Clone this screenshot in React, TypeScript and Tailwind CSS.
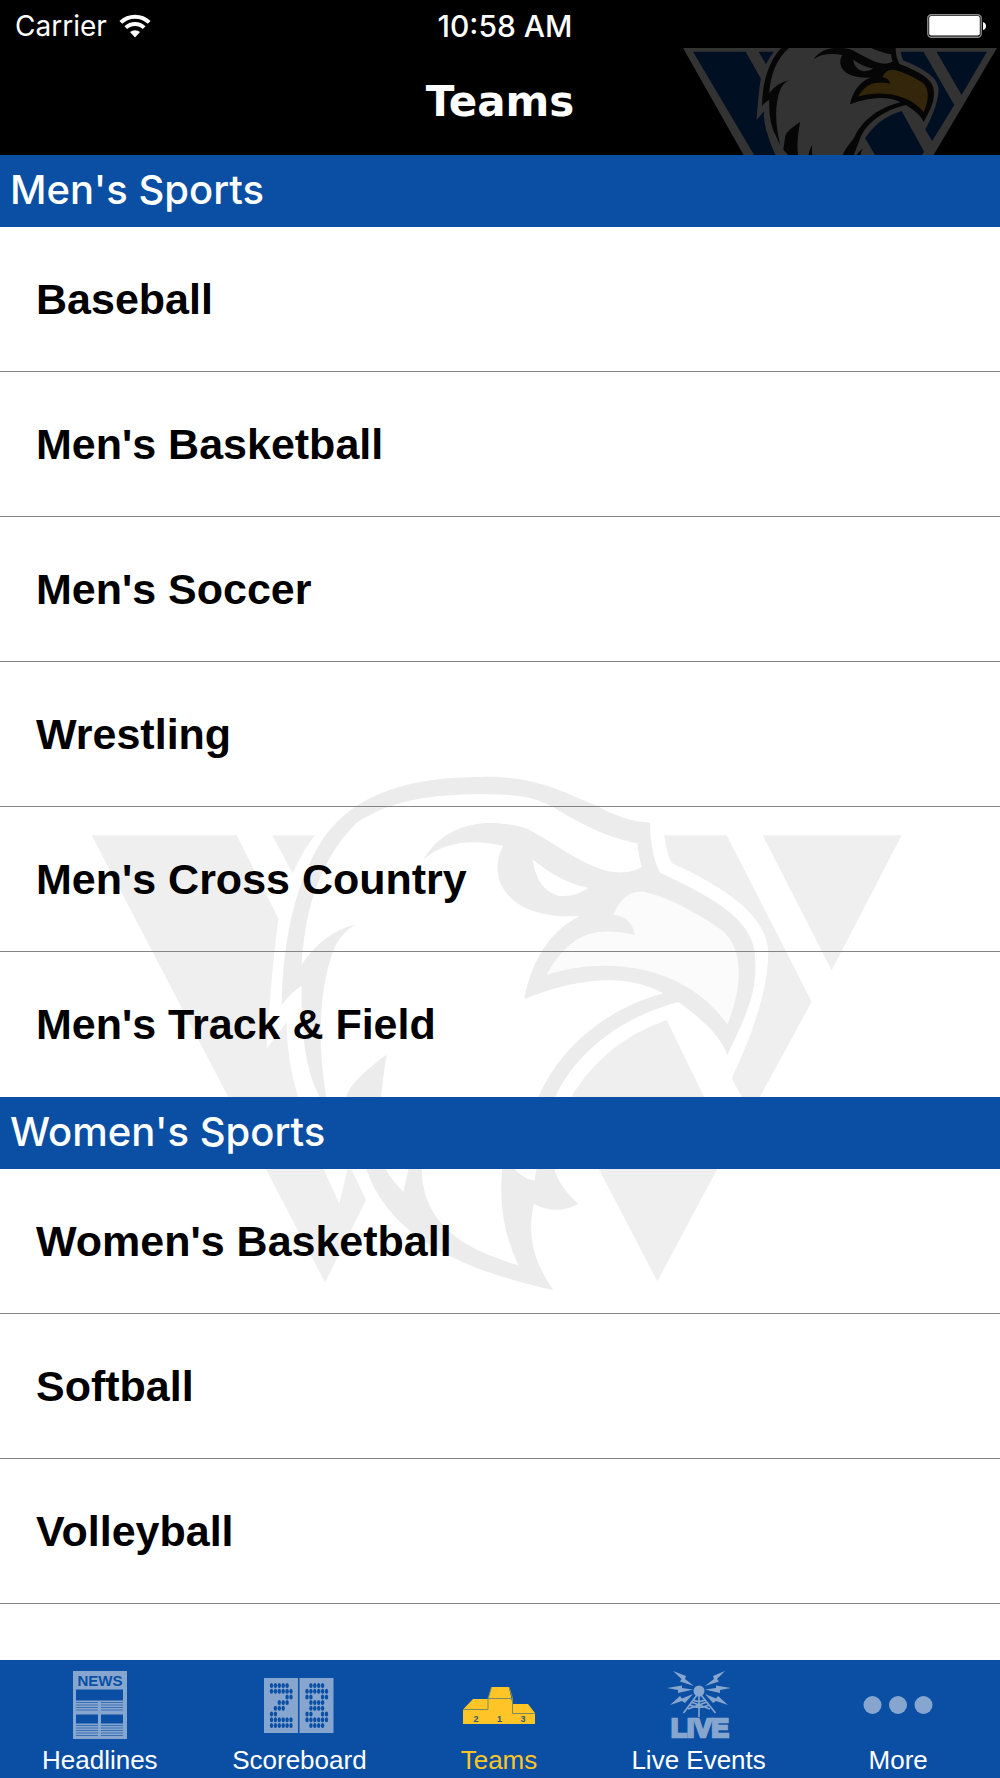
import { useState } from "react";
import type { ReactNode } from "react";

interface LogoColors {
    letter: string;
    outline: string;
    feather: string;
    beak: string;
}

interface Section {
    title: string;
    teams: string[];
}

interface Tab {
    name: string;
    icon: ReactNode;
}

const SECTIONS: Section[] = [
    {
        title: "Men's Sports",
        teams: [
            "Baseball",
            "Men's Basketball",
            "Men's Soccer",
            "Wrestling",
            "Men's Cross Country",
            "Men's Track & Field"
        ]
    },
    {
        title: "Women's Sports",
        teams: ["Women's Basketball", "Softball", "Volleyball", "Women's Cross Country"]
    }
];

const EagleLogo = ({ letter, outline, feather, beak }: LogoColors) => (
    <>
        {/* W behind the head */}
        <g fill={letter}>
            <path d="M95 247H530L655 465Q632 620 620 805L680 735Q680 840 715 932Q745 1040 838 1208L862 1121H875L918 1200L795 1415Z" />
            <path d="M637 247H765Q725 290 698 348Z" />
            <path d="M1812 247H2000L2255 682L2072 975L2015 882Q2125 680 2125 550C2120 460 2000 385 1835 320Q1822 300 1812 247Z" />
            <path d="M2108 247H2525L2315 600Z" />
            <path d="M1820 730L2006 1063L1792 1412L1518 954Q1620 790 1820 730Z" />
        </g>
        {/* head */}
        <path
            fill={outline}
            d="M665 690C668 560 690 390 790 255C890 130 1070 95 1260 95C1440 90 1530 145 1610 170Q1690 210 1770 215Q1772 300 1800 345C1920 395 2090 460 2085 570C2095 660 2050 730 2002 822Q1980 760 1855 683C1690 720 1550 810 1485 932Q1450 1020 1425 1090L1365 1121Q1400 1150 1425 1148Q1425 1090 1500 1036Q1440 1120 1555 1210Q1490 1240 1422 1210C1400 1290 1420 1360 1480 1435C1300 1400 1000 1330 920 1121Q830 1060 780 932Q720 840 725 640Q690 660 665 690Z"
        />
        <path
            fill={feather}
            d="M725 585C735 440 780 310 890 215C990 155 1120 140 1260 140C1400 140 1440 150 1520 195Q1640 255 1732 268Q1735 300 1745 330C1640 380 1530 290 1400 230C1290 200 1160 210 1090 310Q1180 245 1330 275C1280 350 1330 470 1560 458C1460 500 1410 590 1393 675Q1650 585 1810 660C1640 700 1500 800 1435 932C1400 1000 1330 1040 1325 1140Q1315 1260 1375 1370C1220 1330 1090 1270 1085 1121Q1075 1060 1080 1005Q1050 1060 1045 1121L1030 1178Q985 1140 965 1100Q945 1010 980 820Q870 890 858 932L835 1082Q740 760 815 560Q840 500 890 480Q790 500 725 585Z"
        />
        <path fill={feather} d="M1418 310Q1500 370 1585 385Q1545 410 1495 405Q1430 390 1418 310Z" />
        <path
            fill={beak}
            d="M1660 455Q1690 390 1750 395C1830 410 1920 455 1985 495C2050 540 2050 640 2002 742C1880 590 1650 560 1460 612C1530 500 1610 485 1725 508Q1715 460 1660 455Z"
        />
    </>
);

const HeaderLogo = () => (
    <svg
        className="absolute right-[3px] bottom-0 h-[107px] w-[314px]"
        viewBox="12 217 2596 873"
        preserveAspectRatio="none"
        aria-hidden="true"
    >
        <path d="M12 217H2608L2084 1090H513Z" fill="#333333" />
        <EagleLogo letter="#000f22" outline="#060606" feather="#333333" beak="#33260b" />
    </svg>
);

const Watermark = () => (
    <div className="pointer-events-none absolute inset-x-0 top-[620px] flex justify-center">
        <svg
            className="h-[517px] w-[820px]"
            viewBox="90 90 2460 1350"
            preserveAspectRatio="none"
            aria-hidden="true"
        >
            <EagleLogo letter="#efefef" outline="#ececec" feather="#ffffff" beak="#fbfbfb" />
        </svg>
    </div>
);

const WifiIcon = () => (
    <svg className="h-[24px] w-[32px]" viewBox="0 0 32 24" fill="none" stroke="#ffffff" strokeWidth="4" aria-hidden="true">
        <path d="M1.8 8.4a20.5 20.5 0 0 1 28.4 0" />
        <path d="M6.8 13.6a13.3 13.3 0 0 1 18.4 0" />
        <path d="M16 23.5l-5-5.4a7.4 7.4 0 0 1 10 0z" fill="#ffffff" stroke="none" />
    </svg>
);

const BatteryIcon = () => (
    <svg className="h-[24px] w-[60px]" viewBox="0 0 60 24" aria-hidden="true">
        <rect x="0.8" y="0.8" width="53.4" height="22.4" rx="3.5" fill="none" stroke="#8c8c8c" strokeWidth="1.4" />
        <rect x="2.2" y="2" width="50.6" height="19.6" rx="2" fill="#ffffff" />
        <path d="M56 8q3 1 3 4t-3 4z" fill="#ffffff" />
    </svg>
);

const NewsIcon = () => (
    <svg className="h-[68px] w-[54px]" viewBox="0 0 54 68" aria-hidden="true">
        <rect width="54" height="68" fill="#86a6cf" />
        <text
            x="27"
            y="15"
            fill="#0a4fa4"
            fontFamily="Liberation Sans"
            fontWeight="700"
            fontSize="15"
            textAnchor="middle"
        >
            NEWS
        </text>
        <g fill="#0a4fa4">
            <rect x="3" y="18.5" width="47" height="11" />
            <rect x="3" y="43.5" width="22" height="9" />
            <rect x="28" y="43.5" width="22" height="9" />
        </g>
        <path
            d="M3 31.5h22M3 34h22M3 36.5h22M3 39h22M28 31.5h22M28 34h22M28 36.5h22M28 39h22M3 54.5h22M3 57h22M3 59.5h22M3 62h22M3 64.5h22M28 54.5h22M28 57h22M28 59.5h22M28 62h22M28 64.5h22"
            stroke="#0a4fa4"
            strokeOpacity="0.6"
            strokeWidth="1"
        />
    </svg>
);

const DIGIT_TWO = ["11111.", "111111", "....11", "..111.", ".111..", "11....", "111111", "111111"];
const DIGIT_EIGHT = [".1111.", "111111", "11..11", ".1111.", ".1111.", "11..11", "111111", ".1111."];

const DotDigit = ({ rows, left }: { rows: string[]; left: number }) => (
    <>
        {rows.map((row, y) =>
            row.split("").map((dot, x) =>
                dot === "1" ? (
                    <ellipse key={`${x}-${y}`} cx={left + x * 3.9} cy={7.5 + y * 5.7} rx="1.7" ry="2.5" />
                ) : null
            )
        )}
    </>
);

const ScoreboardIcon = () => (
    <svg className="h-[55px] w-[70px]" viewBox="0 0 70 55" aria-hidden="true">
        <rect width="34" height="55" fill="#86a6cf" />
        <rect x="35.5" width="34" height="55" fill="#86a6cf" />
        <g fill="#0a4fa4">
            <DotDigit rows={DIGIT_TWO} left={7.5} />
            <DotDigit rows={DIGIT_EIGHT} left={43} />
        </g>
    </svg>
);

const PodiumIcon = () => (
    <svg className="h-[37px] w-[72px]" viewBox="0 0 72 37" aria-hidden="true">
        <path d="M0 22.5L10 12H25L28.5 0H46L49.5 17H65L72 26V37H0Z" fill="#ffc526" />
        <path d="M0 22.5H25V11.5H49.5V26.5H72M25 12L28.5 0M49.5 17V11L46 0" fill="none" stroke="#7a8a62" strokeWidth="1" />
        <g fill="#2f5580" fontFamily="Liberation Sans" fontWeight="700" fontSize="9" textAnchor="middle">
            <text x="13" y="35">2</text>
            <text x="36.5" y="35">1</text>
            <text x="60" y="35">3</text>
        </g>
    </svg>
);

const LiveIcon = () => (
    <svg className="h-[68px] w-[64px] overflow-visible" viewBox="0 0 64 68" fill="#86a6cf" aria-hidden="true">
        <circle cx="32" cy="20" r="5.5" />
        <path
            d="M30 24L16.5 42M34 24L48.5 42M32 24V46M23 34Q32 39 42 34M26 29Q32 32 38 29M21 38L40 31M43 38L24 31"
            fill="none"
            stroke="#86a6cf"
            strokeWidth="1.6"
        />
        <path d="M6 0L19 5L18 8L27 15L13 10.5L14.5 8Z" />
        <path d="M58 0L46 5L47 8L38 15L52 10.5L50 8Z" />
        <path d="M0 17L15 14.5L15 17L26 18.5L11 22L11 19Z" />
        <path d="M64 17L49 14.5L49 17L38 18.5L53 22L53 19Z" />
        <path d="M3 34L13 25L15 27.5L26 23L18 32L15 30Z" />
        <path d="M61 34L51 25L49 27.5L38 23L46 32L49 30Z" />
        <text
            x="33"
            y="66"
            fontFamily="Liberation Sans"
            fontWeight="700"
            fontSize="26"
            textAnchor="middle"
            stroke="#86a6cf"
            strokeWidth="2.6"
        >
            LIVE
        </text>
    </svg>
);

const MoreIcon = () => (
    <svg className="h-[18px] w-[70px]" viewBox="0 0 70 18" fill="#86a6cf" aria-hidden="true">
        <circle cx="9.5" cy="9" r="9" />
        <circle cx="35" cy="9" r="9" />
        <circle cx="60.5" cy="9" r="9" />
    </svg>
);

const TABS: Tab[] = [
    { name: "Headlines", icon: <NewsIcon /> },
    { name: "Scoreboard", icon: <ScoreboardIcon /> },
    { name: "Teams", icon: <PodiumIcon /> },
    { name: "Live Events", icon: <LiveIcon /> },
    { name: "More", icon: <MoreIcon /> }
];

const TeamSection = ({ title, teams }: Section) => (
    <section>
        <h2 className="flex h-[72px] items-center bg-[#0a4fa4] px-2.5 pb-0.5 font-['Inter',sans-serif] text-[40px] font-medium text-white">
            {title}
        </h2>
        <ul>
            {teams.map((team, i) => (
                <li key={team} className={i < teams.length - 1 ? "border-b border-[#848484]" : "border-b border-transparent"}>
                    <a href="#" className="flex h-36 items-center px-9 text-[43px] font-bold text-black">
                        {team}
                    </a>
                </li>
            ))}
        </ul>
    </section>
);

export default function App() {
    const [active, setActive] = useState("Teams");

    return (
        <div className="flex h-screen flex-col bg-white font-['Liberation_Sans',sans-serif]">
            <header className="relative shrink-0 bg-black text-white">
                <HeaderLogo />
                <div className="relative flex h-12 items-center justify-between pt-1 pr-[13px] pl-[15px] font-['Inter',sans-serif] text-[28px]">
                    <div className="flex flex-1 items-center gap-3">
                        <span>Carrier</span>
                        <WifiIcon />
                    </div>
                    <span className="pl-2 text-[30px] font-medium">10:58 AM</span>
                    <div className="flex flex-1 justify-end">
                        <BatteryIcon />
                    </div>
                </div>
                <h1 className="relative flex h-[107px] items-center justify-center font-['DejaVu_Sans',sans-serif] text-[42px] font-bold">
                    Teams
                </h1>
            </header>

            <main className="relative min-h-0 flex-1 overflow-y-auto [scrollbar-width:none]">
                <Watermark />
                <div className="relative">
                    {SECTIONS.map((section) => (
                        <TeamSection key={section.title} {...section} />
                    ))}
                </div>
            </main>

            <nav className="grid shrink-0 grid-cols-5 bg-[#0a4fa4] pt-2.5 pr-0.5">
                {TABS.map((tab) => (
                    <button
                        key={tab.name}
                        type="button"
                        onClick={() => setActive(tab.name)}
                        className={`flex h-[108px] flex-col items-center text-[26px] leading-8 ${
                            active === tab.name ? "text-[#ffc526]" : "text-white"
                        }`}
                    >
                        <span className="flex h-[70px] items-center">{tab.icon}</span>
                        <span className="mt-1">{tab.name}</span>
                    </button>
                ))}
            </nav>
        </div>
    );
}
